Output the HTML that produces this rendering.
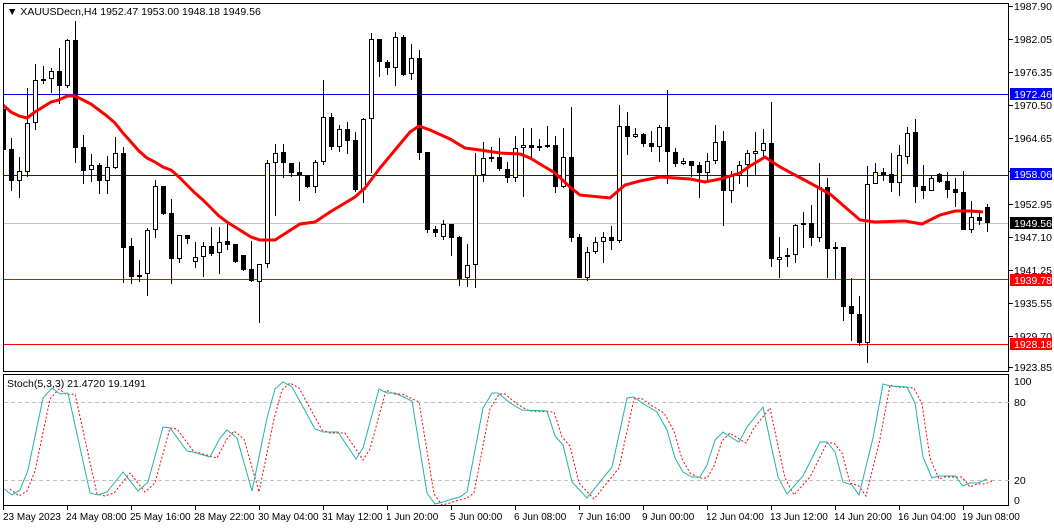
<!DOCTYPE html>
<html><head><meta charset="utf-8"><style>
html,body{margin:0;padding:0;background:#fff;}
svg{display:block;font-family:"Liberation Sans",sans-serif;font-size:10.5px;}
.B{fill:#000}
.W{fill:#fff;stroke:#000;stroke-width:1}
</style></head><body>
<svg width="1054" height="528" viewBox="0 0 1054 528" xmlns="http://www.w3.org/2000/svg" shape-rendering="crispEdges">
<rect width="1054" height="528" fill="#fff"/>
<defs>
<clipPath id="cm"><rect x="4" y="4" width="1005" height="368"/></clipPath>
<clipPath id="cs"><rect x="4" y="375" width="1005" height="131"/></clipPath>
</defs>
<g clip-path="url(#cm)">
<line x1="3" y1="94.5" x2="1009" y2="94.5" stroke="#0000ff"/>
<line x1="3" y1="175.5" x2="1009" y2="175.5" stroke="#0000ff"/>
<line x1="3" y1="223.5" x2="1009" y2="223.5" stroke="#c0c0c0"/>
<line x1="3" y1="279.5" x2="1009" y2="279.5" stroke="#ff0000"/>
<line x1="3" y1="344.5" x2="1009" y2="344.5" stroke="#ff0000"/>
<path stroke="#000" stroke-width="1" fill="none" d="M3.5 97V163M11.5 138V191M19.5 157V198M27.5 88V177M35.5 64V130M43.5 66V84M51.5 68V93M59.5 48V104M67.5 39V88M75.5 21V163M83.5 135V184M91.5 154V182M99.5 163V194M107.5 156V194M115.5 137V169M123.5 147V283M131.5 238V284M139.5 260V282M147.5 228V296M155.5 180V238M163.5 186V215M171.5 199V284M179.5 235V263M187.5 235V244M195.5 242V268M203.5 242V277M211.5 227V256M219.5 227V274M227.5 223V250M235.5 244V263M243.5 255V271M251.5 241V282M259.5 264V323M267.5 160V268M275.5 144V216M283.5 144V178M291.5 163V177M299.5 162V201M307.5 175V188M315.5 160V193M323.5 80V165M331.5 113V150M339.5 125V152M347.5 122V154M355.5 132V192M363.5 118V203M371.5 33V173M379.5 39V77M387.5 60V75M395.5 32V86M403.5 35V76M411.5 44V80M419.5 50V160M427.5 152V233M435.5 226V237M443.5 220V240M451.5 224V256M459.5 236V286M467.5 244V287M475.5 153V288M483.5 142V182M491.5 147V162M499.5 138V171M507.5 162V183M515.5 136V182M523.5 128V197M531.5 128V159M539.5 139V151M547.5 126V148M555.5 136V193M563.5 128V188M571.5 107V242M579.5 234V278M587.5 247V281M595.5 237V254M603.5 232V263M611.5 226V250M619.5 105V243M627.5 112V155M635.5 128V138M643.5 133V147M651.5 131V152M659.5 125V162M667.5 90V184M675.5 148V167M683.5 158V165M691.5 161V177M699.5 162V198M707.5 153V182M715.5 125V164M723.5 131V226M731.5 171V203M739.5 161V184M747.5 150V187M755.5 132V175M763.5 129V157M771.5 102V267M779.5 237V278M787.5 248V267M795.5 224V263M803.5 212V248M811.5 205V246M819.5 163V242M827.5 178V278M835.5 242V279M843.5 247V321M851.5 278V341M859.5 296V346M867.5 166V363M875.5 163V184M883.5 168V181M891.5 153V192M899.5 145V196M907.5 127V164M915.5 119V203M923.5 165V199M931.5 176V191M939.5 173V183M947.5 172V198M955.5 178V207M963.5 171V230M971.5 201V233M979.5 210V225M987.5 204V232"/>
<g>
<rect class="B" x="1" y="109" width="5" height="41"/>
<rect class="B" x="9" y="149" width="5" height="32"/>
<rect class="W" x="17.5" y="171.5" width="4" height="9"/>
<rect class="W" x="25.5" y="123.5" width="4" height="48"/>
<rect class="W" x="33.5" y="80.5" width="4" height="42"/>
<rect class="B" x="41" y="79" width="5" height="2"/>
<rect class="W" x="49.5" y="71.5" width="4" height="7"/>
<rect class="B" x="57" y="71" width="5" height="15"/>
<rect class="W" x="65.5" y="40.5" width="4" height="45"/>
<rect class="B" x="73" y="40" width="5" height="108"/>
<rect class="B" x="81" y="147" width="5" height="24"/>
<rect class="W" x="89.5" y="165.5" width="4" height="4"/>
<rect class="B" x="97" y="165" width="5" height="16"/>
<rect class="W" x="105.5" y="167.5" width="4" height="13"/>
<rect class="W" x="113.5" y="153.5" width="4" height="14"/>
<rect class="B" x="121" y="153" width="5" height="95"/>
<rect class="B" x="129" y="246" width="5" height="31"/>
<rect class="B" x="137" y="275" width="5" height="2"/>
<rect class="W" x="145.5" y="230.5" width="4" height="43"/>
<rect class="W" x="153.5" y="186.5" width="4" height="43"/>
<rect class="B" x="161" y="186" width="5" height="28"/>
<rect class="B" x="169" y="213" width="5" height="46"/>
<rect class="W" x="177.5" y="235.5" width="4" height="23"/>
<rect class="B" x="185" y="235" width="5" height="4"/>
<rect class="W" x="193.5" y="257.5" width="4" height="4"/>
<rect class="W" x="201.5" y="246.5" width="4" height="10"/>
<rect class="B" x="209" y="246" width="5" height="8"/>
<rect class="W" x="217.5" y="242.5" width="4" height="10"/>
<rect class="B" x="225" y="241" width="5" height="4"/>
<rect class="B" x="233" y="244" width="5" height="18"/>
<rect class="B" x="241" y="255" width="5" height="15"/>
<rect class="B" x="249" y="269" width="5" height="12"/>
<rect class="W" x="257.5" y="264.5" width="4" height="17"/>
<rect class="W" x="265.5" y="163.5" width="4" height="100"/>
<rect class="W" x="273.5" y="153.5" width="4" height="9"/>
<rect class="B" x="281" y="152" width="5" height="11"/>
<rect class="B" x="289" y="163" width="5" height="10"/>
<rect class="B" x="297" y="172" width="5" height="3"/>
<rect class="B" x="305" y="175" width="5" height="12"/>
<rect class="W" x="313.5" y="162.5" width="4" height="24"/>
<rect class="W" x="321.5" y="117.5" width="4" height="44"/>
<rect class="B" x="329" y="117" width="5" height="30"/>
<rect class="W" x="337.5" y="129.5" width="4" height="17"/>
<rect class="B" x="345" y="129" width="5" height="12"/>
<rect class="B" x="353" y="140" width="5" height="50"/>
<rect class="W" x="361.5" y="119.5" width="4" height="70"/>
<rect class="W" x="369.5" y="39.5" width="4" height="79"/>
<rect class="B" x="377" y="39" width="5" height="23"/>
<rect class="B" x="385" y="62" width="5" height="6"/>
<rect class="W" x="393.5" y="37.5" width="4" height="30"/>
<rect class="B" x="401" y="37" width="5" height="38"/>
<rect class="W" x="409.5" y="58.5" width="4" height="15"/>
<rect class="B" x="417" y="58" width="5" height="95"/>
<rect class="B" x="425" y="152" width="5" height="78"/>
<rect class="B" x="433" y="229" width="5" height="4"/>
<rect class="W" x="441.5" y="224.5" width="4" height="12"/>
<rect class="B" x="449" y="224" width="5" height="14"/>
<rect class="B" x="457" y="237" width="5" height="42"/>
<rect class="W" x="465.5" y="265.5" width="4" height="12"/>
<rect class="W" x="473.5" y="175.5" width="4" height="89"/>
<rect class="W" x="481.5" y="158.5" width="4" height="16"/>
<rect class="B" x="489" y="157" width="5" height="2"/>
<rect class="B" x="497" y="157" width="5" height="12"/>
<rect class="B" x="505" y="169" width="5" height="9"/>
<rect class="W" x="513.5" y="148.5" width="4" height="29"/>
<rect class="W" x="521.5" y="145.5" width="4" height="2"/>
<rect class="B" x="529" y="145" width="5" height="3"/>
<rect class="W" x="537.5" y="146.5" width="4" height="1"/>
<rect class="B" x="545" y="145" width="5" height="2"/>
<rect class="B" x="553" y="145" width="5" height="42"/>
<rect class="W" x="561.5" y="157.5" width="4" height="29"/>
<rect class="B" x="569" y="157" width="5" height="81"/>
<rect class="B" x="577" y="237" width="5" height="41"/>
<rect class="W" x="585.5" y="252.5" width="4" height="25"/>
<rect class="W" x="593.5" y="242.5" width="4" height="9"/>
<rect class="W" x="601.5" y="237.5" width="4" height="4"/>
<rect class="B" x="609" y="237" width="5" height="4"/>
<rect class="W" x="617.5" y="126.5" width="4" height="114"/>
<rect class="B" x="625" y="126" width="5" height="11"/>
<rect class="W" x="633.5" y="134.5" width="4" height="2"/>
<rect class="B" x="641" y="134" width="5" height="10"/>
<rect class="B" x="649" y="143" width="5" height="4"/>
<rect class="W" x="657.5" y="127.5" width="4" height="19"/>
<rect class="B" x="665" y="127" width="5" height="25"/>
<rect class="B" x="673" y="152" width="5" height="12"/>
<rect class="W" x="681.5" y="161.5" width="4" height="2"/>
<rect class="B" x="689" y="161" width="5" height="5"/>
<rect class="B" x="697" y="165" width="5" height="8"/>
<rect class="W" x="705.5" y="161.5" width="4" height="11"/>
<rect class="W" x="713.5" y="142.5" width="4" height="18"/>
<rect class="B" x="721" y="141" width="5" height="50"/>
<rect class="W" x="729.5" y="176.5" width="4" height="14"/>
<rect class="W" x="737.5" y="165.5" width="4" height="10"/>
<rect class="W" x="745.5" y="153.5" width="4" height="11"/>
<rect class="W" x="753.5" y="151.5" width="4" height="2"/>
<rect class="W" x="761.5" y="143.5" width="4" height="7"/>
<rect class="B" x="769" y="143" width="5" height="116"/>
<rect class="W" x="777.5" y="257.5" width="4" height="2"/>
<rect class="W" x="785.5" y="255.5" width="4" height="1"/>
<rect class="W" x="793.5" y="225.5" width="4" height="29"/>
<rect class="W" x="801.5" y="223.5" width="4" height="1"/>
<rect class="B" x="809" y="223" width="5" height="15"/>
<rect class="W" x="817.5" y="187.5" width="4" height="50"/>
<rect class="B" x="825" y="187" width="5" height="62"/>
<rect class="W" x="833.5" y="247.5" width="4" height="1"/>
<rect class="B" x="841" y="247" width="5" height="60"/>
<rect class="B" x="849" y="306" width="5" height="8"/>
<rect class="B" x="857" y="314" width="5" height="29"/>
<rect class="W" x="865.5" y="184.5" width="4" height="158"/>
<rect class="W" x="873.5" y="172.5" width="4" height="11"/>
<rect class="B" x="881" y="172" width="5" height="3"/>
<rect class="B" x="889" y="174" width="5" height="9"/>
<rect class="W" x="897.5" y="155.5" width="4" height="27"/>
<rect class="W" x="905.5" y="133.5" width="4" height="23"/>
<rect class="B" x="913" y="132" width="5" height="55"/>
<rect class="B" x="921" y="186" width="5" height="5"/>
<rect class="W" x="929.5" y="178.5" width="4" height="12"/>
<rect class="B" x="937" y="174" width="5" height="8"/>
<rect class="B" x="945" y="181" width="5" height="9"/>
<rect class="B" x="953" y="189" width="5" height="4"/>
<rect class="B" x="961" y="192" width="5" height="38"/>
<rect class="W" x="969.5" y="217.5" width="4" height="12"/>
<rect class="B" x="977" y="217" width="5" height="4"/>
<rect class="B" x="985" y="207" width="5" height="16"/>
</g>
<polyline fill="none" stroke="#ff0000" stroke-width="3" shape-rendering="auto" points="0,103 3,105 11,112 19,116 27,118 35,112 43,107 51,102 59,100 67,96 75,96 83,100 91,104 99,110 107,116 115,123 123,133 131,142 139,151 147,158 155,162 163,167 171,170 179,177 187,185 195,193 203,200 211,208 219,216 227,222 235,227 243,232 251,237 260,240 275,240 300,224 315,222 330,212 350,200 355,197 365,188 380,168 395,150 410,132 419,126 430,130 450,139 465,148 480,150 500,153 520,154 530,158 540,164 555,173 570,187 580,195 610,198 625,185 640,181 660,177 690,179 705,182 720,179 740,173 750,166 765,157 780,167 795,175 810,183 830,194 845,207 860,220 875,222 905,221 922,224 940,215 955,211 970,211 983,212"/>
</g>
<rect x="3.5" y="3.5" width="1005" height="368" fill="none" stroke="#000"/>
<rect x="3.5" y="374.5" width="1005" height="131" fill="none" stroke="#000"/>
<text x="7" y="15" font-size="10.5">&#9660; XAUUSDecn,H4  1952.47 1953.00 1948.18 1949.56</text>
<g font-size="10.5" fill="#000">
<path stroke="#000" d="M1009 6.5h4M1009 39.5h4M1009 72.5h4M1009 105.5h4M1009 138.5h4M1009 171.5h4M1009 204.5h4M1009 237.5h4M1009 270.5h4M1009 303.5h4M1009 336.5h4M1009 367.5h4"/>
<text x="1014" y="10">1987.90</text>
<text x="1014" y="43">1982.05</text>
<text x="1014" y="76">1976.35</text>
<text x="1014" y="109">1970.50</text>
<text x="1014" y="142">1964.65</text>
<text x="1014" y="208">1952.95</text>
<text x="1014" y="241">1947.10</text>
<text x="1014" y="274">1941.25</text>
<text x="1014" y="307">1935.55</text>
<text x="1014" y="340">1929.70</text>
<text x="1014" y="371">1923.85</text>
<rect x="1010" y="88" width="42" height="12" fill="#0000ff"/><text x="1014" y="98" fill="#fff">1972.46</text>
<rect x="1010" y="168" width="42" height="12" fill="#0000ff"/><text x="1014" y="178" fill="#fff">1958.06</text>
<rect x="1010" y="217" width="42" height="12" fill="#000"/><text x="1014" y="227" fill="#fff">1949.56</text>
<rect x="1010" y="274" width="42" height="12" fill="#ff0000"/><text x="1014" y="284" fill="#fff">1939.78</text>
<rect x="1010" y="338" width="42" height="12" fill="#ff0000"/><text x="1014" y="348" fill="#fff">1928.18</text>
</g>
<g clip-path="url(#cs)">
<line x1="4" y1="402.5" x2="1009" y2="402.5" stroke="#c0c0c0" stroke-dasharray="4,3"/>
<line x1="4" y1="480.5" x2="1009" y2="480.5" stroke="#c0c0c0" stroke-dasharray="4,3"/>
<defs><polyline id="st" fill="none" points="3,488 12,495 20,490 28,470 43,398 52,388 60,394 68,393 90,493 98,495 107,492 123,472 138,491 148,482 163,427 170,428 187,451 193,452 210,457 220,438 227,430 237,438 252,491 267,418 275,389 283,382 292,387 303,407 315,429 323,432 338,432 356,459 363,448 379,389 387,393 395,393 412,401 427,493 435,504 443,502 452,499 460,497 467,492 483,408 492,393 498,393 510,403 522,410 547,411 555,436 563,445 572,482 587,498 612,467 627,398 634,397 642,403 657,412 667,430 675,458 683,472 692,477 700,477 707,465 715,440 723,432 732,438 739,442 747,427 763,407 770,440 778,477 787,494 803,476 820,442 827,442 835,452 843,482 852,485 859,495 873,438 883,384 890,386 907,387 915,403 923,457 932,478 938,476 955,476 963,486 970,483 978,483 987,479"/></defs>
<use href="#st" transform="translate(7,1)" stroke="#ff0000" stroke-dasharray="2,2" shape-rendering="auto"/>
<use href="#st" stroke="#20b2aa" shape-rendering="auto"/>
</g>
<text x="7" y="387" font-size="10.5">Stoch(5,3,3) 21.4720 19.1491</text>
<g font-size="10.5">
<text x="1014" y="385">100</text>
<text x="1014" y="406">80</text>
<text x="1014" y="484">20</text>
<text x="1014" y="504">0</text>
</g>
<path stroke="#000" d="M3.5 506v4M67.5 506v4M131.5 506v4M195.5 506v4M259.5 506v4M323.5 506v4M387.5 506v4M451.5 506v4M515.5 506v4M579.5 506v4M643.5 506v4M707.5 506v4M771.5 506v4M835.5 506v4M899.5 506v4M963.5 506v4"/>
<g font-size="10">
<text x="3" y="520">23 May 2023</text>
<text x="66" y="520">24 May 08:00</text>
<text x="130" y="520">25 May 16:00</text>
<text x="194" y="520">28 May 22:00</text>
<text x="258" y="520">30 May 04:00</text>
<text x="322" y="520">31 May 12:00</text>
<text x="386" y="520">1 Jun 20:00</text>
<text x="450" y="520">5 Jun 00:00</text>
<text x="514" y="520">6 Jun 08:00</text>
<text x="578" y="520">7 Jun 16:00</text>
<text x="642" y="520">9 Jun 00:00</text>
<text x="706" y="520">12 Jun 04:00</text>
<text x="770" y="520">13 Jun 12:00</text>
<text x="834" y="520">14 Jun 20:00</text>
<text x="898" y="520">16 Jun 04:00</text>
<text x="962" y="520">19 Jun 08:00</text>
</g>
</svg>
</body></html>
